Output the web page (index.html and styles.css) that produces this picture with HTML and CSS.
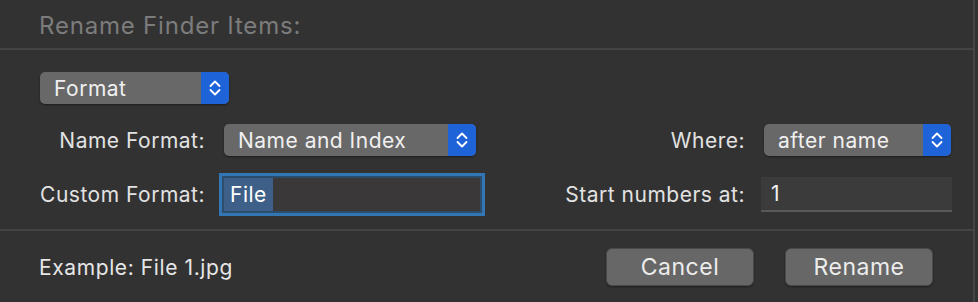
FILE: index.html
```html
<!DOCTYPE html>
<html lang="en">
<head>
  <meta charset="UTF-8">
  <title>Rename Finder Items</title>
  <link rel="stylesheet" href="styles.css">
</head>
<body>

  <div class="dialog">
    <div class="title">Rename Finder Items:</div>

    <div class="content">
      <div class="popup popup-mode">
        <span class="popup-text">Format</span>
        <span class="stepper">
          <svg width="12" height="20" viewBox="0 0 12 20"><path d="M1.5 8 L6 3.5 L10.5 8 M1.5 12 L6 16.5 L10.5 12" fill="none" stroke="#fff" stroke-width="1.8" stroke-linecap="round" stroke-linejoin="round"/></svg>
        </span>
      </div>

      <div class="form">
        <label class="label">Name Format:</label>
        <div class="popup popup-name">
          <span class="popup-text">Name and Index</span>
          <span class="stepper">
            <svg width="12" height="20" viewBox="0 0 12 20"><path d="M1.5 8 L6 3.5 L10.5 8 M1.5 12 L6 16.5 L10.5 12" fill="none" stroke="#fff" stroke-width="1.8" stroke-linecap="round" stroke-linejoin="round"/></svg>
          </span>
        </div>
        <label class="label">Where:</label>
        <div class="popup popup-where">
          <span class="popup-text">after name</span>
          <span class="stepper">
            <svg width="12" height="20" viewBox="0 0 12 20"><path d="M1.5 8 L6 3.5 L10.5 8 M1.5 12 L6 16.5 L10.5 12" fill="none" stroke="#fff" stroke-width="1.8" stroke-linecap="round" stroke-linejoin="round"/></svg>
          </span>
        </div>

        <label class="label">Custom Format:</label>
        <div class="field field-focus"><span class="selected">File</span></div>
        <label class="label">Start numbers at:</label>
        <div class="field field-number">1</div>
      </div>
    </div>

    <div class="footer">
      <div class="example">Example: File 1.jpg</div>
      <div class="buttons">
        <button class="btn">Cancel</button>
        <button class="btn">Rename</button>
      </div>
    </div>
  </div>

</body>
</html>
```

FILE: styles.css
```css
body {
  margin: 0;
  background: #323232;
  font-family: Inter, "Noto Sans", sans-serif;
  color: #e2e2e2;
}

.dialog {
  width: 973px;
  height: 302px;
  border-right: 2px solid #454545;
}

.title {
  height: 50px;
  box-sizing: border-box;
  padding: 11px 0 0 39px;
  font-size: 24px;
  letter-spacing: 0.8px;
  color: #7c7c7c;
  border-bottom: 2px solid #444;
}

.content {
  padding: 22px 0 0 40px;
  height: 181px;
  box-sizing: border-box;
  border-bottom: 2px solid #444;
}

.popup {
  display: flex;
  align-items: stretch;
  height: 32px;
  box-sizing: border-box;
  background: #686868;
  border-radius: 5px;
  box-shadow: 0 1px 2px rgba(0,0,0,0.45);
  overflow: hidden;
  font-size: 21px;
  letter-spacing: 0.5px;
}

.popup-text {
  flex: 1;
  display: flex;
  align-items: center;
  padding-left: 14px;
  color: #f0f0f0;
}

.stepper {
  width: 28px;
  display: flex;
  align-items: center;
  justify-content: center;
  background: #1f63d8;
}

.popup-mode {
  width: 189px;
}

.form {
  display: grid;
  grid-template-columns: 165px 261px 241px 191px;
  column-gap: 19px;
  row-gap: 21px;
  margin-top: 20px;
  align-items: center;
}

.label {
  text-align: right;
  font-size: 21px;
  letter-spacing: 0.5px;
  color: #e2e2e2;
}

.popup-name {
  width: 252px;
}

.popup-where {
  width: 187px;
}

.field {
  height: 35px;
  box-sizing: border-box;
  font-size: 21px;
  letter-spacing: 0.5px;
  display: flex;
  align-items: center;
}

.field-focus {
  width: 256px;
  height: 33px;
  background: #3a3838;
  box-shadow: 0 0 0 2px #2b4d6b, 0 0 0 5px #3277b4;
}

.selected {
  background: #3e5f88;
  color: #fff;
  height: 100%;
  display: flex;
  align-items: center;
  padding: 0 6px;
}

.field-number {
  width: 191px;
  margin-left: -3px;
  background: #3b3b3b;
  border-bottom: 2px solid #585858;
  padding-left: 10px;
  color: #f0f0f0;
}

.footer {
  display: flex;
  align-items: center;
  justify-content: space-between;
  padding: 17px 40px 0 39px;
}

.example {
  font-size: 21px;
  letter-spacing: 0.6px;
  color: #e6e6e6;
}

.buttons {
  display: flex;
  gap: 31px;
}

.btn {
  width: 148px;
  height: 38px;
  background: #676767;
  border: 1px solid #4a4a4a;
  border-radius: 6px;
  box-shadow: 0 1px 2px rgba(0,0,0,0.4);
  font-family: Inter, "Noto Sans", sans-serif;
  font-size: 23px;
  letter-spacing: 0.5px;
  color: #ececec;
  padding: 0;
}
```
